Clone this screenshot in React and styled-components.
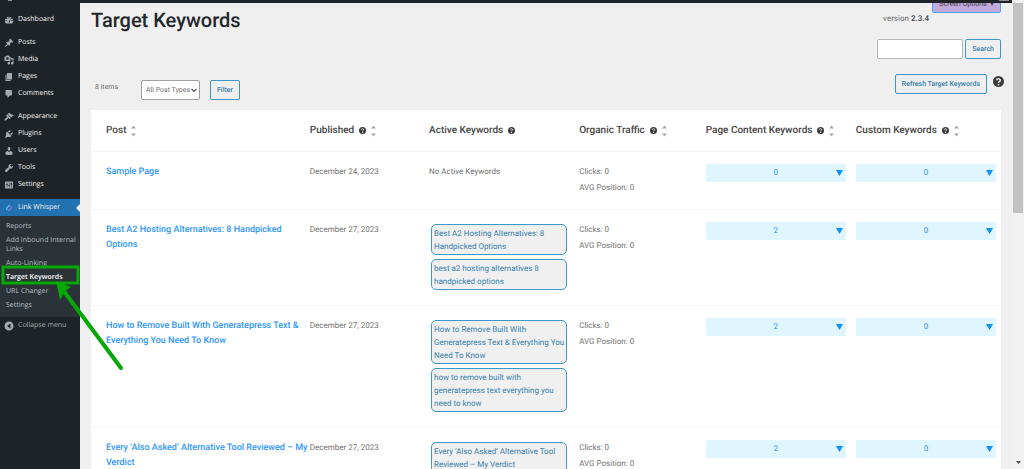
import React from 'react';
import styled, { createGlobalStyle, ThemeProvider } from 'styled-components';

const theme = {
  colors: {
    dark: '#1d2327',
    submenu: '#2c3338',
    active: '#2271b1',
    page: '#efefef',
    white: '#ffffff',
    line: '#f3f3f3',
    heading: '#23282d',
    label: '#444444',
    text: '#707070',
    link: '#2f96fb',
    accent: '#3f97c6',
    accentText: '#3580ad',
    pale: '#dff5ff',
    mark: '#06a806',
  },
  fonts: {
    body: "Roboto, 'Liberation Sans', sans-serif",
    menu: "'Open Sans', 'Noto Sans', sans-serif",
  },
};

const GlobalStyle = createGlobalStyle`
  *, *::before, *::after { box-sizing: border-box; }

  body {
    margin: 0;
    background: #efefef;
    overflow: hidden;
    text-rendering: geometricPrecision;
  }

  button, input, select { font: inherit; margin: 0; text-rendering: inherit; }
  a { text-decoration: none; color: inherit; }
`;

const Page = styled.div`
  display: grid;
  grid-template-columns: 80px minmax(0, 1fr) 12px;
  height: 100vh;
  overflow: hidden;
  background: ${({ theme }) => theme.colors.page};
  font-family: ${({ theme }) => theme.fonts.body};
  font-size: 8px;
  color: ${({ theme }) => theme.colors.text};
`;

const AdminBar = styled.header`
  grid-column: 1 / 3;
  height: 3px;
  padding: 0 3px 0 8px;
  display: flex;
  justify-content: space-between;
  background: ${({ theme }) => theme.colors.dark};
  position: relative;
  z-index: 2;

  i {
    width: 4px;
    height: 1px;
    background: #8c8f94;
  }

  i:last-child { width: 10px; }
`;

const Sidebar = styled.nav`
  position: relative;
  grid-row: 2;
  padding-top: 8px;
  background: ${({ theme }) => theme.colors.dark};
  font-family: ${({ theme }) => theme.fonts.menu};
  font-size: 7px;
  color: #f0f0f1;
`;

const MenuGroup = styled.div`
  margin-bottom: 6px;
`;

const MenuItem = styled.a`
  position: relative;
  display: flex;
  align-items: center;
  gap: 4px;
  height: 17px;
  padding-left: 4px;
  font-weight: ${({ $muted }) => ($muted ? 400 : 500)};
  background: ${({ $active, theme }) => ($active ? theme.colors.active : 'transparent')};
  color: ${({ $muted }) => ($muted ? '#a7aaad' : '#f0f0f1')};

  svg {
    width: 10px;
    height: 10px;
    fill: #a7aaad;
    flex: none;
  }

  &::after {
    content: '';
    display: ${({ $active }) => ($active ? 'block' : 'none')};
    position: absolute;
    right: 0;
    top: 5px;
    border: 4px solid transparent;
    border-left: 0;
    border-right-color: ${({ theme }) => theme.colors.page};
  }
`;

const Submenu = styled.div`
  padding: 3px 0 5px;
  background: ${({ theme }) => theme.colors.submenu};
`;

const SubmenuLink = styled.a`
  display: block;
  padding: 3px 0 2px 6px;
  line-height: 9px;
  font-weight: ${({ $current }) => ($current ? 600 : 400)};
  color: ${({ $current }) => ($current ? '#ffffff' : '#b9bdc1')};
`;

const Highlight = styled.svg`
  position: absolute;
  left: 0;
  top: 260px;
  width: 126px;
  height: 110px;
  z-index: 3;
  pointer-events: none;
`;

const Main = styled.main`
  position: relative;
  grid-row: 2;
  padding: 4px 11px 0;
  overflow: hidden;
`;

const ScreenOptions = styled.button`
  position: absolute;
  right: 11px;
  top: -8px;
  width: 69px;
  height: 18px;
  padding: 0;
  border: 1px solid #4ba6ff;
  border-radius: 2px;
  background: #c3aadb;
  font-size: 7px;
  color: #3c4046;
`;

const TitleRow = styled.div`
  display: flex;
  justify-content: space-between;
  height: 32px;
`;

const Title = styled.h1`
  margin: 0;
  font-size: 20px;
  line-height: 26px;
  font-weight: 500;
  color: ${({ theme }) => theme.colors.heading};
`;

const Version = styled.p`
  margin: 0 72px 0 0;
  font-size: 8px;
  line-height: 24px;

  b { font-weight: 500; color: ${({ theme }) => theme.colors.label}; }
`;

const SearchForm = styled.form`
  display: flex;
  justify-content: flex-end;
  gap: 2px;
`;

const SearchInput = styled.input`
  width: 86px;
  height: 20px;
  border: 1px solid #b5b5b5;
  border-radius: 2px;
  background: ${({ theme }) => theme.colors.white};
`;

const OutlineButton = styled.button`
  height: 20px;
  padding: 0 6px;
  border: 1px solid ${({ theme }) => theme.colors.accent};
  border-radius: 2px;
  background: transparent;
  font-size: 7px;
  font-weight: 500;
  color: ${({ theme }) => theme.colors.accentText};
`;

const Toolbar = styled.div`
  display: flex;
  align-items: flex-start;
  gap: 10px;
  height: 36px;
  margin-top: 15px;
  padding: 6px 0 0 4px;
`;

const ItemCount = styled.span`
  width: 36px;
  line-height: 14px;
  font-size: 7px;
`;

const TypeSelect = styled.label`
  position: relative;
  display: block;

  select {
    appearance: none;
    width: 59px;
    height: 20px;
    padding: 0 0 0 4px;
    border: 1px solid #a0a0a0;
    border-radius: 2px;
    background: ${({ theme }) => theme.colors.white};
    font-size: 7px;
    color: ${({ theme }) => theme.colors.text};
  }

  svg {
    position: absolute;
    right: 3px;
    top: 8px;
    width: 6px;
    height: 5px;
  }
`;

const RefreshGroup = styled.div`
  display: flex;
  gap: 6px;
  margin: -6px -3px 0 auto;

  svg { width: 11px; height: 11px; margin-top: 2px; }
`;

const Table = styled.table`
  width: 100%;
  table-layout: fixed;
  border-collapse: collapse;
  background: ${({ theme }) => theme.colors.white};
`;

const HeadCell = styled.th`
  width: ${({ $width }) => $width};
  height: 41px;
  padding: 0 5px;
  border-bottom: 1px solid ${({ theme }) => theme.colors.line};
  text-align: left;
  font-size: 10px;
  font-weight: 500;
  color: ${({ theme }) => theme.colors.label};

  &:first-child { padding-left: 15px; }
`;

const HeadLabel = styled.div`
  display: flex;
  align-items: center;
  gap: 5px;
  white-space: nowrap;

  .help { width: 7px; height: 7px; }
  .sort { width: 5px; height: 12px; margin-top: 2px; }
`;

const Cell = styled.td`
  padding: 12px 5px 13px;
  border-bottom: 1px solid ${({ theme }) => theme.colors.line};
  vertical-align: top;
  line-height: 16px;

  &:first-child { padding-left: 15px; }
`;

const PostLink = styled.a`
  display: block;
  padding-top: 1px;
  font-size: 9px;
  line-height: 15px;
  font-weight: 500;
  white-space: pre;
  color: ${({ theme }) => theme.colors.link};
`;

const KeywordList = styled.ul`
  display: grid;
  gap: 4px;
  margin: 0;
  padding: 2px;
  list-style: none;
`;

const Keyword = styled.li`
  padding: 2px 2px 1px;
  border: 1px solid ${({ theme }) => theme.colors.accent};
  border-radius: 5px;
  background: #f0f0f0;
  line-height: 13px;
  white-space: pre;
  color: ${({ theme }) => theme.colors.accentText};
`;

const CountSelect = styled.label`
  position: relative;
  display: block;
  height: 18px;

  select {
    appearance: none;
    display: block;
    width: 100%;
    height: 18px;
    padding: 0;
    border: 0;
    border-radius: 2px;
    background: ${({ theme }) => theme.colors.pale};
    color: ${({ theme }) => theme.colors.link};
    text-align: center;
    text-align-last: center;
  }

  svg {
    position: absolute;
    right: 3px;
    top: 6px;
    width: 7px;
    height: 6px;
  }
`;

const ScrollRail = styled.div`
  grid-column: 3;
  grid-row: 1 / 3;
  display: flex;
  flex-direction: column;
  justify-content: space-between;
  align-items: center;
  padding: 3px 0 5px;
  background: #f1f1f1;

  span { width: 10px; height: 210px; background: #c1c1c1; }
  svg { width: 5px; height: 3px; }
`;

const icons = {
  dashboard:
    'M3.8 17h12.4A8 8 0 1 0 3.8 17zM9 4h2v2H9zM4.5 6.2h2v2h-2zM13.5 6.2h2v2h-2zM3 10h2v2H3zM15 10h2v2h-2zM9.2 13.5l3.9-6-1.6 7a1.4 1.4 0 0 1-2.3-1z',
  posts:
    'M10.44 3.02l1.82-1.82 6.36 6.35-1.83 1.82c-1.05-.68-2.48-.57-3.41.36l-.75.75c-.92.93-1.04 2.35-.35 3.41l-1.83 1.82-2.41-2.41-2.8 2.79c-.42.42-3.38 2.71-3.8 2.29s1.86-3.39 2.28-3.81l2.79-2.79L4.1 9.36l1.83-1.82c1.05.69 2.48.57 3.4-.36l.75-.75c.93-.92 1.05-2.35.36-3.41z',
  media:
    'M13 11V4c0-.55-.45-1-1-1h-1.67L9 1H5L3.67 3H2c-.55 0-1 .45-1 1v7c0 .55.45 1 1 1h10c.55 0 1-.45 1-1zM7 4.5c1.38 0 2.5 1.12 2.5 2.5S8.38 9.5 7 9.5 4.5 8.38 4.5 7 5.62 4.5 7 4.5zM14 6h5v10.5c0 1.38-1.12 2.5-2.5 2.5S14 17.88 14 16.5s1.12-2.5 2.5-2.5c.17 0 .34.02.5.05V9h-3V6zm-4 8.05V13h2v3.5c0 1.38-1.12 2.5-2.5 2.5S7 17.88 7 16.5 8.12 14 9.5 14c.17 0 .34.02.5.05z',
  pages: 'M6 15V2h10v13H6zm-1 1h8v2H3V5h2v11z',
  comments:
    'M5 2h9c1.1 0 2 .9 2 2v7c0 1.1-.9 2-2 2h-2l-5 5v-5H5c-1.1 0-2-.9-2-2V4c0-1.1.9-2 2-2z',
  appearance:
    'M14.48 11.06L7.41 3.99l1.5-1.5c.5-.56 2.3-.47 3.51.32 1.21.8 1.43 1.28 2.91 2.1 1.18.64 2.45 1.26 4.45.85zm-.71.71L6.7 4.7 4.93 6.47c-.39.39-.39 1.02 0 1.41l1.06 1.06c.39.39.39 1.03 0 1.42-.6.6-1.43 1.11-2.21 1.69-.35.26-.7.53-1.01.84C1.43 14.23.4 16.08 1.4 17.07c.99 1 2.84-.03 4.18-1.36.31-.31.58-.66.85-1.02.57-.78 1.08-1.61 1.69-2.21.39-.39 1.02-.39 1.41 0l1.06 1.06c.39.39 1.02.39 1.41 0z',
  plugins:
    'M13.11 4.36L9.87 7.6 8 5.73l3.24-3.24c.35-.34 1.05-.2 1.56.32.52.51.66 1.21.31 1.55zm-8 1.77l.91-1.12 9.01 9.01-1.19.84c-.71.71-2.63 1.16-3.82 1.16H6.14L4.9 17.26c-.59.59-1.54.59-2.12 0-.59-.58-.59-1.53 0-2.12l1.24-1.24v-3.88c0-1.13.4-3.19 1.09-3.89zm7.26 3.97l3.24-3.24c.34-.35 1.04-.21 1.55.31.52.51.66 1.21.31 1.55l-3.24 3.25z',
  users:
    'M10 9.25c-2.27 0-2.73-3.44-2.73-3.44C7 4.02 7.82 2 9.97 2c2.16 0 2.98 2.02 2.71 3.81 0 0-.41 3.44-2.68 3.44zm0 2.57L12.72 10c2.39 0 4.52 2.33 4.52 4.53v2.49s-3.65 1.13-7.24 1.13c-3.65 0-7.24-1.13-7.24-1.13v-2.49c0-2.25 1.94-4.48 4.47-4.48z',
  tools:
    'M16.68 9.77c-1.34 1.34-3.3 1.67-4.95.99l-5.41 6.52c-.99.99-2.59.99-3.58 0s-.99-2.59 0-3.57l6.52-5.42c-.68-1.65-.35-3.61.99-4.95 1.28-1.28 3.12-1.62 4.72-1.06l-2.89 2.89 2.82 2.82 2.86-2.87c.53 1.58.18 3.39-1.08 4.65z',
  settings:
    'M3 3h14a1 1 0 0 1 1 1v12a1 1 0 0 1-1 1H3a1 1 0 0 1-1-1V4a1 1 0 0 1 1-1zM5.5 5v3H4.5v2h1v5h1v-5h1V8h-1V5zM10 5v5H9v2h1v3h1v-3h1v-2h-1V5zM14 5v2h-1v2h1v6h1V9h1V7h-1V5z',
  collapse: 'M10 1a9 9 0 1 0 0 18 9 9 0 0 0 0-18zm3 4v10l-7-5z',
};

const menu = [
  [['Dashboard', 'dashboard']],
  [['Posts', 'posts'], ['Media', 'media'], ['Pages', 'pages'], ['Comments', 'comments']],
  [
    ['Appearance', 'appearance'],
    ['Plugins', 'plugins'],
    ['Users', 'users'],
    ['Tools', 'tools'],
    ['Settings', 'settings'],
  ],
];

const submenu = ['Reports', 'Add Inbound Internal Links', 'Auto-Linking', 'Target Keywords', 'URL Changer', 'Settings'];

const columns = [
  { label: 'Post', width: '23.5%', sort: true },
  { label: 'Published', width: '13.1%', help: true, sort: true },
  { label: 'Active Keywords', width: '16.5%', help: true },
  { label: 'Organic Traffic', width: '13.9%', help: true, sort: true },
  { label: 'Page Content Keywords', width: '16.5%', help: true, sort: true },
  { label: 'Custom Keywords', width: '16.5%', help: true, sort: true },
];

const posts = [
  { title: 'Sample Page', date: 'December 24, 2023', keywords: [], content: 0 },
  {
    title: 'Best A2 Hosting Alternatives: 8 Handpicked\nOptions',
    date: 'December 27, 2023',
    keywords: [
      'Best A2 Hosting Alternatives: 8\nHandpicked Options',
      'best a2 hosting alternatives 8\nhandpicked options',
    ],
    content: 2,
  },
  {
    title: 'How to Remove Built With Generatepress Text &\nEverything You Need To Know',
    date: 'December 27, 2023',
    keywords: [
      'How to Remove Built With\nGeneratepress Text & Everything You\nNeed To Know',
      'how to remove built with\ngeneratepress text everything you\nneed to know',
    ],
    content: 2,
  },
  {
    title: 'Every ‘Also Asked’ Alternative Tool Reviewed – My\nVerdict',
    date: 'December 27, 2023',
    keywords: ['Every ‘Also Asked’ Alternative Tool\nReviewed – My Verdict'],
    content: 2,
  },
];

const MenuIcon = ({ name }) => (
  <svg viewBox="0 0 20 20" aria-hidden="true">
    <path fillRule="evenodd" d={icons[name]} />
  </svg>
);

const HelpIcon = () => (
  <svg className="help" viewBox="0 0 16 16" aria-hidden="true">
    <circle cx="8" cy="8" r="8" fill="#3a3a3a" />
    <path d="M5.4 6.2a2.6 2.3 0 1 1 3.8 2Q8 8.8 8 10" fill="none" stroke="#fff" strokeWidth="2" />
    <circle cx="8" cy="12.5" r="1.3" fill="#fff" />
  </svg>
);

const SortIcon = () => (
  <svg className="sort" viewBox="0 0 5 12" fill="#a9a9a9" aria-hidden="true">
    <path d="M0 3.5L2.5 0.5 5 3.5zM0 8.5h5L2.5 11.5z" />
  </svg>
);

const CountField = ({ label, value }) => (
  <CountSelect>
    <select aria-label={label} defaultValue={value}>
      <option>{value}</option>
    </select>
    <svg viewBox="0 0 7 6" aria-hidden="true">
      <path d="M0 0h7L3.5 6z" fill="#0b93ff" />
    </svg>
  </CountSelect>
);

class App extends React.Component {
  renderMenu() {
    return (
      <Sidebar>
        {menu.map((group) => (
          <MenuGroup key={group[0][0]}>
            {group.map(([label, icon]) => (
              <MenuItem href="#" key={label}>
                <MenuIcon name={icon} />
                {label}
              </MenuItem>
            ))}
          </MenuGroup>
        ))}
        <MenuItem href="#" $active>
          <svg viewBox="0 0 20 20" aria-hidden="true">
            <g fill="none" strokeWidth="2.4">
              <path d="M12 4L6 9q-2 3 1 5" stroke="#4fc4f2" />
              <path d="M8 16l6-5q2-3-1-5" stroke="#a06be8" />
            </g>
          </svg>
          Link Whisper
        </MenuItem>
        <Submenu>
          {submenu.map((label) => (
            <SubmenuLink href="#" key={label} $current={label === 'Target Keywords'}>
              {label}
            </SubmenuLink>
          ))}
        </Submenu>
        <MenuItem href="#" $muted>
          <MenuIcon name="collapse" />
          Collapse menu
        </MenuItem>
        <Highlight viewBox="0 0 126 110" aria-hidden="true">
          <rect x="3" y="4" width="75" height="16" fill="none" stroke={theme.colors.mark} strokeWidth="3" />
          <path d="M63 27L121 105" stroke={theme.colors.mark} strokeWidth="4" strokeLinecap="round" />
          <path d="M56 18L71 24 65 28 60 37z" fill={theme.colors.mark} />
        </Highlight>
      </Sidebar>
    );
  }

  renderTable() {
    return (
      <Table>
        <thead>
          <tr>
            {columns.map((col) => (
              <HeadCell key={col.label} $width={col.width}>
                <HeadLabel>
                  {col.label}
                  {col.help && <HelpIcon />}
                  {col.sort && <SortIcon />}
                </HeadLabel>
              </HeadCell>
            ))}
          </tr>
        </thead>
        <tbody>
          {posts.map((post) => (
            <tr key={post.title}>
              <Cell>
                <PostLink href="#">{post.title}</PostLink>
              </Cell>
              <Cell>{post.date}</Cell>
              <Cell>
                {post.keywords.length === 0 && 'No Active Keywords'}
                {post.keywords.length > 0 && (
                  <KeywordList>
                    {post.keywords.map((word) => (
                      <Keyword key={word}>{word}</Keyword>
                    ))}
                  </KeywordList>
                )}
              </Cell>
              <Cell>
                <div>Clicks: 0</div>
                <div>AVG Position: 0</div>
              </Cell>
              <Cell>
                <CountField label="Page Content Keywords" value={post.content} />
              </Cell>
              <Cell>
                <CountField label="Custom Keywords" value={0} />
              </Cell>
            </tr>
          ))}
        </tbody>
      </Table>
    );
  }

  render() {
    return (
      <ThemeProvider theme={theme}>
        <GlobalStyle />
        <Page>
          <AdminBar>
            <i />
            <i />
          </AdminBar>
          {this.renderMenu()}
          <Main>
            <ScreenOptions type="button">Screen Options &nbsp;▾</ScreenOptions>
            <TitleRow>
              <Title>Target Keywords</Title>
              <Version>
                version <b>2.3.4</b>
              </Version>
            </TitleRow>
            <SearchForm>
              <SearchInput type="search" aria-label="Search keywords" />
              <OutlineButton type="button">Search</OutlineButton>
            </SearchForm>
            <Toolbar>
              <ItemCount>8 items</ItemCount>
              <TypeSelect>
                <select aria-label="Post type" defaultValue="All Post Types">
                  <option>All Post Types</option>
                </select>
                <svg viewBox="0 0 6 5" aria-hidden="true">
                  <path d="M0.5 1L3 3.5 5.5 1" fill="none" stroke="#555" strokeWidth="1.2" />
                </svg>
              </TypeSelect>
              <OutlineButton type="button">Filter</OutlineButton>
              <RefreshGroup>
                <OutlineButton type="button">Refresh Target Keywords</OutlineButton>
                <HelpIcon />
              </RefreshGroup>
            </Toolbar>
            {this.renderTable()}
          </Main>
          <ScrollRail>
            <span />
            <svg viewBox="0 0 5 3" aria-hidden="true">
              <path d="M0 0h5L2.5 3z" fill="#505050" />
            </svg>
          </ScrollRail>
        </Page>
      </ThemeProvider>
    );
  }
}

export default App;
